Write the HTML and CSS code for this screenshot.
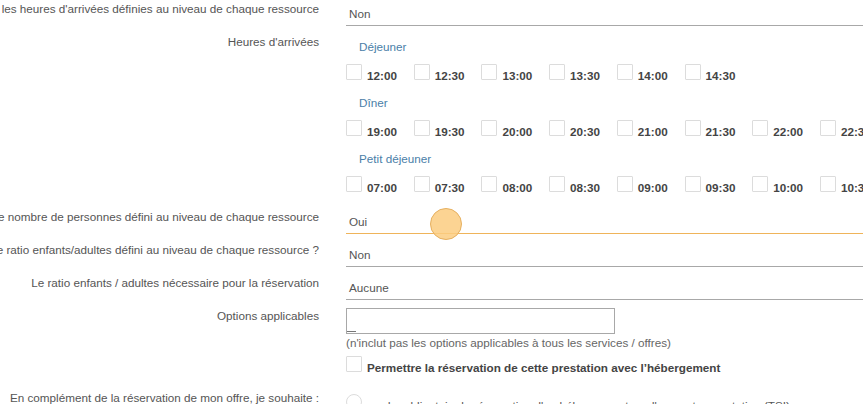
FILE: index.html
```html
<!DOCTYPE html>
<html lang="fr">
<head>
  <meta charset="UTF-8" />
  <meta name="viewport" content="width=device-width, initial-scale=1.0" />
  <title>Prestation</title>
  <link rel="stylesheet" href="styles.css">
</head>
<body>
  <form class="form">
    <div class="row">
      <div class="label"><span>Utiliser les heures d'arrivées définies au niveau de chaque ressource</span></div>
      <div class="field"><div class="select">Non</div></div>
    </div>

    <div class="row">
      <div class="label"><span>Heures d'arrivées</span></div>
      <div class="field">
        <div class="group-title">Déjeuner</div>
        <div class="slots">
          <div class="slot"><span class="box"></span>12:00</div>
          <div class="slot"><span class="box"></span>12:30</div>
          <div class="slot"><span class="box"></span>13:00</div>
          <div class="slot"><span class="box"></span>13:30</div>
          <div class="slot"><span class="box"></span>14:00</div>
          <div class="slot"><span class="box"></span>14:30</div>
        </div>
        <div class="group-title">Dîner</div>
        <div class="slots">
          <div class="slot"><span class="box"></span>19:00</div>
          <div class="slot"><span class="box"></span>19:30</div>
          <div class="slot"><span class="box"></span>20:00</div>
          <div class="slot"><span class="box"></span>20:30</div>
          <div class="slot"><span class="box"></span>21:00</div>
          <div class="slot"><span class="box"></span>21:30</div>
          <div class="slot"><span class="box"></span>22:00</div>
          <div class="slot"><span class="box"></span>22:30</div>
        </div>
        <div class="group-title">Petit déjeuner</div>
        <div class="slots">
          <div class="slot"><span class="box"></span>07:00</div>
          <div class="slot"><span class="box"></span>07:30</div>
          <div class="slot"><span class="box"></span>08:00</div>
          <div class="slot"><span class="box"></span>08:30</div>
          <div class="slot"><span class="box"></span>09:00</div>
          <div class="slot"><span class="box"></span>09:30</div>
          <div class="slot"><span class="box"></span>10:00</div>
          <div class="slot"><span class="box"></span>10:30</div>
        </div>
      </div>
    </div>

    <div class="row">
      <div class="label"><span>Utiliser le nombre de personnes défini au niveau de chaque ressource</span></div>
      <div class="field">
        <div class="select focused">Oui<span class="touch"></span></div>
      </div>
    </div>

    <div class="row">
      <div class="label"><span>Utiliser le ratio enfants/adultes défini au niveau de chaque ressource ?</span></div>
      <div class="field"><div class="select">Non</div></div>
    </div>

    <div class="row">
      <div class="label"><span>Le ratio enfants / adultes nécessaire pour la réservation</span></div>
      <div class="field"><div class="select">Aucune</div></div>
    </div>

    <div class="row row-options">
      <div class="label"><span>Options applicables</span></div>
      <div class="field">
        <div class="multi"><span class="caret"></span></div>
        <div class="help">(n'inclut pas les options applicables à tous les services / offres)</div>
        <div class="check"><span class="box"></span>Permettre la réservation de cette prestation avec l’hébergement</div>
      </div>
    </div>

    <div class="row row-extra">
      <div class="label"><span>En complément de la réservation de mon offre, je souhaite :</span></div>
      <div class="field">
        <div class="radio"><span class="circle"></span>rendre obligatoire la réservation d'un hébergement ou d'une autre prestation (TSI)</div>
      </div>
    </div>
  </form>
</body>
</html>
```

FILE: styles.css
```css
html, body {
  overflow: hidden;
}

body {
  margin: 0;
  font-family: 'Liberation Sans', Arial, sans-serif;
  font-size: 11.7px;
  color: #555;
  background-color: white;
}

.row {
  display: grid;
  grid-template-columns: 319px 1fr;
  column-gap: 27px;
  margin-bottom: 7px;
}

.label {
  display: flex;
  justify-content: flex-end;
  line-height: 17px;
  white-space: nowrap;
  color: #555;
}

.select {
  position: relative;
  padding: 5px 3px 3px;
  line-height: 17px;
  border-bottom: 1px solid #a8a8a8;
}

.select.focused {
  border-bottom-color: #efb45a;
}

.touch {
  position: absolute;
  left: 84px;
  top: 0;
  width: 30px;
  height: 30px;
  border-radius: 50%;
  background-color: rgba(251, 204, 128, 0.85);
  border: 1px solid #e6b060;
}

.group-title {
  padding: 6px 0 0 13px;
  line-height: 16px;
  color: #4a80a8;
}

.slots {
  display: flex;
  gap: 16.8px;
  padding: 9px 0 5px;
  white-space: nowrap;
}

.slot {
  line-height: 16px;
  font-weight: bold;
  color: #444;
}

.box {
  display: inline-block;
  width: 14px;
  height: 14px;
  border: 1px solid #dcdcdc;
  border-radius: 1px;
  margin-right: 5px;
  vertical-align: baseline;
}

.row-options {
  margin-bottom: 0;
}

.multi {
  position: relative;
  width: 267px;
  height: 24px;
  margin-top: 1px;
  border: 1px solid #a8a8a8;
}

.caret {
  position: absolute;
  left: 0;
  bottom: 1px;
  width: 9px;
  border-top: 1px solid #777;
}

.help {
  line-height: 17px;
  color: #666;
}

.check {
  margin-top: 5px;
  line-height: 16px;
  font-weight: bold;
  color: #444;
  white-space: nowrap;
}

.row-extra {
  margin-top: 13px;
}

.radio {
  margin-top: 5px;
  line-height: 16px;
  color: #555;
  white-space: nowrap;
}

.circle {
  display: inline-block;
  width: 14px;
  height: 14px;
  border: 1px solid #dcdcdc;
  border-radius: 50%;
  margin-right: 5px;
  vertical-align: baseline;
}
```
